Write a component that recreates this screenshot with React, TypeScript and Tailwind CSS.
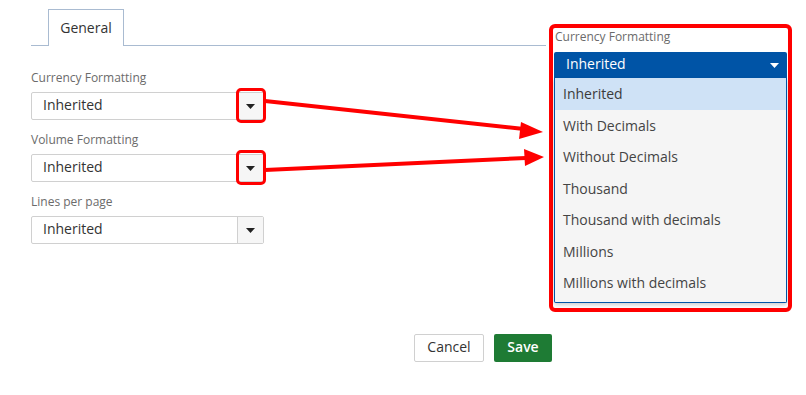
const options = [
  'Inherited',
  'With Decimals',
  'Without Decimals',
  'Thousand',
  'Thousand with decimals',
  'Millions',
  'Millions with decimals',
];

function Caret({ className }: { className: string }) {
  return (
    <svg width="9" height="5" viewBox="0 0 9 5" className={className}>
      <path d="M0 0h9L4.5 5z" fill="currentColor" />
    </svg>
  );
}

function SelectField({ label, marked }: { label: string; marked?: boolean }) {
  return (
    <div className="flex flex-col">
      <span className="text-[12px] leading-[16px] text-[#6b6b6b]">{label}</span>
      <div className="mt-[6px] flex h-[28px] w-[233px] items-stretch rounded-[2px] border border-[#d0d0d0] bg-white">
        <span className="flex flex-1 items-center pb-[3px] pl-[11px] text-[14px] text-[#333]">Inherited</span>
        <span className="relative flex w-[26px] items-center justify-center border-l border-[#d0d0d0] bg-[#f6f6f6]">
          <Caret className="text-[#222]" />
          {marked && (
            <span className="absolute -top-[5px] -right-[3px] -bottom-[4px] -left-[2px] rounded-[5px] border-[3px] border-[#ff0000]" />
          )}
        </span>
      </div>
    </div>
  );
}

export default function App() {
  return (
    <div
      className="relative flex h-[395px] w-[806px] flex-col bg-white"
      style={{ fontFamily: '"Open Sans", "Liberation Sans", sans-serif' }}
    >
      <div className="flex">
        <div className="flex w-[549px] flex-col pl-[31px]">
          <div className="mt-[9px] flex h-[37px] w-[515px] border-b border-[#a9bbd1]">
            <div className="ml-[17px] flex h-[37px] w-[76px] items-center justify-center border border-b-0 border-[#a9bbd1] bg-white pb-[1px] text-[14px] text-[#333]">
              General
            </div>
          </div>
          <div className="mt-[24px] flex flex-col gap-[12px]">
            <SelectField label="Currency Formatting" marked />
            <SelectField label="Volume Formatting" marked />
            <SelectField label="Lines per page" />
          </div>
        </div>

        <div className="mt-[24px] flex h-[288px] w-[243px] flex-col rounded-[6px] border-4 border-[#ff0000] px-[1px]">
          <span className="h-[24px] pt-[1px] pl-[1px] text-[12px] leading-[16px] text-[#6b6b6b]">Currency Formatting</span>
          <div className="flex h-[26px] items-center justify-between rounded-t-[2px] bg-[#0054a6] pr-[8px] pl-[12px] text-[14px] text-white">
            <span className="pb-[3px]">Inherited</span>
            <Caret className="text-white" />
          </div>
          <div className="flex flex-col rounded-b-[2px] border border-t-0 border-[#0054a6] bg-[#f5f5f5] pb-[3px] shadow-[0_2px_4px_rgba(0,0,0,0.2)]">
            {options.map((o, i) => (
              <div
                key={o}
                className={`flex h-[31.5px] items-center pl-[8px] text-[14px] ${
                  i === 0 ? 'bg-[#cfe2f6] text-[#3b3b3b]' : 'text-[#444]'
                }`}
              >
                {o}
              </div>
            ))}
          </div>
        </div>
      </div>

      <div className="mt-[22px] flex gap-[10px] pl-[414px]">
        <button className="h-[28px] w-[70px] rounded-[2px] border border-[#d0d0d0] bg-white pb-[3px] text-[14px] text-[#333]">
          Cancel
        </button>
        <button className="h-[28px] w-[58px] rounded-[2px] bg-[#1e7b34] pb-[3px] text-[14px] font-semibold text-white">
          Save
        </button>
      </div>

      <svg className="pointer-events-none absolute inset-0" width="806" height="395">
        <line x1="265" y1="101" x2="524" y2="129" stroke="#ff0000" strokeWidth="4" />
        <path d="M543 132L521 122L519 139Z" fill="#ff0000" />
        <line x1="265" y1="170" x2="526" y2="158" stroke="#ff0000" strokeWidth="4" />
        <path d="M544 157L524 149L525 166Z" fill="#ff0000" />
      </svg>
    </div>
  );
}
